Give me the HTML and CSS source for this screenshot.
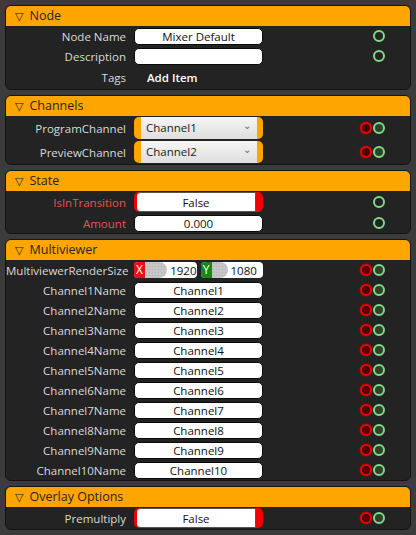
FILE: index.html
```html
<!DOCTYPE html>
<html lang="en">

<head>
    <meta charset="UTF-8" />
    <meta name="viewport" content="width=device-width, initial-scale=1.0" />
    <title>Mixer Properties</title>
    <link rel="stylesheet" href="styles.css">
</head>

<body>
    <div class="panel">
        <div class="panel-head"><span class="caret">▽</span>Node</div>
        <div class="row">
            <label>Node Name</label>
            <div class="field text">Mixer Default</div>
            <div class="pins"><span class="pin out"></span></div>
        </div>
        <div class="row">
            <label>Description</label>
            <div class="field text"></div>
            <div class="pins"><span class="pin out"></span></div>
        </div>
        <div class="row tags">
            <label>Tags</label>
            <div class="add-item">Add Item</div>
        </div>
    </div>

    <div class="panel">
        <div class="panel-head"><span class="caret">▽</span>Channels</div>
        <div class="row combo-row">
            <label>ProgramChannel</label>
            <div class="field combo"><div class="combo-inner">Channel1<span class="chevron">⌄</span></div></div>
            <div class="pins"><span class="pin in"></span><span class="pin out linked"></span></div>
        </div>
        <div class="row combo-row">
            <label>PreviewChannel</label>
            <div class="field combo"><div class="combo-inner">Channel2<span class="chevron">⌄</span></div></div>
            <div class="pins"><span class="pin in"></span><span class="pin out linked"></span></div>
        </div>
    </div>

    <div class="panel">
        <div class="panel-head"><span class="caret">▽</span>State</div>
        <div class="row toggle-row">
            <label class="warn">IsInTransition</label>
            <div class="field toggle"><div class="toggle-inner">False</div></div>
            <div class="pins"><span class="pin out"></span></div>
        </div>
        <div class="row">
            <label class="warn">Amount</label>
            <div class="field text">0.000</div>
            <div class="pins"><span class="pin out"></span></div>
        </div>
    </div>

    <div class="panel">
        <div class="panel-head"><span class="caret">▽</span>Multiviewer</div>
        <div class="row">
            <label>MultiviewerRenderSize</label>
            <div class="vector">
                <div class="axis">
                    <span class="axis-tag x">X</span>
                    <span class="thumb wide"></span>
                    <span class="axis-value">1920</span>
                </div>
                <div class="axis">
                    <span class="axis-tag y">Y</span>
                    <span class="thumb"></span>
                    <span class="axis-value">1080</span>
                </div>
            </div>
            <div class="pins"><span class="pin in"></span><span class="pin out linked"></span></div>
        </div>
        <div class="row">
            <label>Channel1Name</label>
            <div class="field text">Channel1</div>
            <div class="pins"><span class="pin in"></span><span class="pin out linked"></span></div>
        </div>
        <div class="row">
            <label>Channel2Name</label>
            <div class="field text">Channel2</div>
            <div class="pins"><span class="pin in"></span><span class="pin out linked"></span></div>
        </div>
        <div class="row">
            <label>Channel3Name</label>
            <div class="field text">Channel3</div>
            <div class="pins"><span class="pin in"></span><span class="pin out linked"></span></div>
        </div>
        <div class="row">
            <label>Channel4Name</label>
            <div class="field text">Channel4</div>
            <div class="pins"><span class="pin in"></span><span class="pin out linked"></span></div>
        </div>
        <div class="row">
            <label>Channel5Name</label>
            <div class="field text">Channel5</div>
            <div class="pins"><span class="pin in"></span><span class="pin out linked"></span></div>
        </div>
        <div class="row">
            <label>Channel6Name</label>
            <div class="field text">Channel6</div>
            <div class="pins"><span class="pin in"></span><span class="pin out linked"></span></div>
        </div>
        <div class="row">
            <label>Channel7Name</label>
            <div class="field text">Channel7</div>
            <div class="pins"><span class="pin in"></span><span class="pin out linked"></span></div>
        </div>
        <div class="row">
            <label>Channel8Name</label>
            <div class="field text">Channel8</div>
            <div class="pins"><span class="pin in"></span><span class="pin out linked"></span></div>
        </div>
        <div class="row">
            <label>Channel9Name</label>
            <div class="field text">Channel9</div>
            <div class="pins"><span class="pin in"></span><span class="pin out linked"></span></div>
        </div>
        <div class="row">
            <label>Channel10Name</label>
            <div class="field text">Channel10</div>
            <div class="pins"><span class="pin in"></span><span class="pin out linked"></span></div>
        </div>
    </div>

    <div class="panel">
        <div class="panel-head"><span class="caret">▽</span>Overlay Options</div>
        <div class="row toggle-row">
            <label>Premultiply</label>
            <div class="field toggle"><div class="toggle-inner">False</div></div>
            <div class="pins"><span class="pin in"></span><span class="pin out linked"></span></div>
        </div>
    </div>
</body>

</html>
```

FILE: styles.css
```css
:root {
    --page-bg: #3b3b3b;
    --panel-bg: #232323;
    --panel-border: #141414;
    --orange: #ffa500;
    --label: #dadada;
    --warn: #e85454;
    --red: #f00000;
    --green: #84d884;
}

* {
    margin: 0;
    padding: 0;
    box-sizing: border-box;
    font-family: 'Open Sans', 'Noto Sans', sans-serif;
}

body {
    background: var(--page-bg);
    padding: 5px;
    font-size: 11.5px;
    color: var(--label);
}

.panel {
    background: var(--panel-bg);
    border: 1px solid var(--panel-border);
    border-radius: 6px;
    overflow: hidden;
    margin-bottom: 5px;
}

.panel-head {
    height: 20px;
    line-height: 20px;
    background: var(--orange);
    color: #262626;
    font-size: 12.5px;
    padding-left: 9px;
}

.caret {
    display: inline-block;
    font-family: 'DejaVu Sans', sans-serif;
    font-size: 11px;
    margin-right: 6px;
}

.row {
    display: grid;
    grid-template-columns: 120px 129px 1fr;
    column-gap: 8px;
    align-items: center;
    height: 20px;
}

.row label {
    text-align: right;
    white-space: nowrap;
}

.row label.warn {
    color: var(--warn);
}

.tags {
    height: 23px;
}

.combo-row {
    height: 24px;
}

.toggle-row {
    height: 22px;
}

.add-item {
    color: #fff;
    padding-left: 13px;
    font-weight: 600;
}

.field {
    height: 17px;
    border-radius: 5px;
    color: #111;
    line-height: 17px;
}

.text {
    background: #fff;
    border: 1px solid #0a0a0a;
    text-align: center;
    line-height: 15px;
}

.combo {
    height: 22px;
    background: var(--orange);
    padding: 0 6px 0 7px;
}

.combo-inner {
    height: 22px;
    line-height: 22px;
    background: linear-gradient(#f6f6f6, #dedede);
    padding-left: 5px;
    position: relative;
    color: #1a1a1a;
}

.chevron {
    position: absolute;
    right: 6px;
    top: -3px;
    font-size: 10px;
    color: #666;
}

.toggle {
    height: 20px;
    background: var(--red);
    padding: 0 7px 0 3px;
}

.toggle-inner {
    height: 20px;
    line-height: 19px;
    background: #fff;
    border: 1px solid #555;
    border-left: none;
    border-radius: 4px 0 0 4px;
    text-align: center;
}

.vector {
    display: flex;
    gap: 4px;
    height: 16px;
}

.axis {
    flex: 1;
    display: flex;
    align-items: center;
    background: #fff;
    border-radius: 4px;
    overflow: hidden;
    color: #111;
}

.axis-tag {
    width: 11px;
    height: 16px;
    line-height: 16px;
    text-align: center;
    color: #fff;
    font-size: 12px;
}

.axis-tag.x {
    background: #e81010;
}

.axis-tag.y {
    background: #138a13;
}

.thumb {
    width: 16px;
    height: 16px;
    border-radius: 0 8px 8px 0;
    background-color: #c6c6c6;
    background-image: radial-gradient(#b2b2b2 0.6px, transparent 0.8px);
    background-size: 3px 3px;
}

.thumb.wide {
    width: 23px;
}

.axis-value {
    padding-left: 3px;
}

.pins {
    display: flex;
    justify-content: flex-end;
    gap: 1px;
    padding-right: 25px;
}

.pin {
    width: 12px;
    height: 12px;
    border-radius: 50%;
}

.pin.in {
    border: 2px solid var(--red);
    background: #4a0000;
    box-shadow: 0 0 2px rgba(255, 0, 0, 0.6);
}

.pin.out {
    border: 2px solid var(--green);
    background: var(--panel-bg);
}

.pin.out.linked {
    background: #2c442c;
}
```
